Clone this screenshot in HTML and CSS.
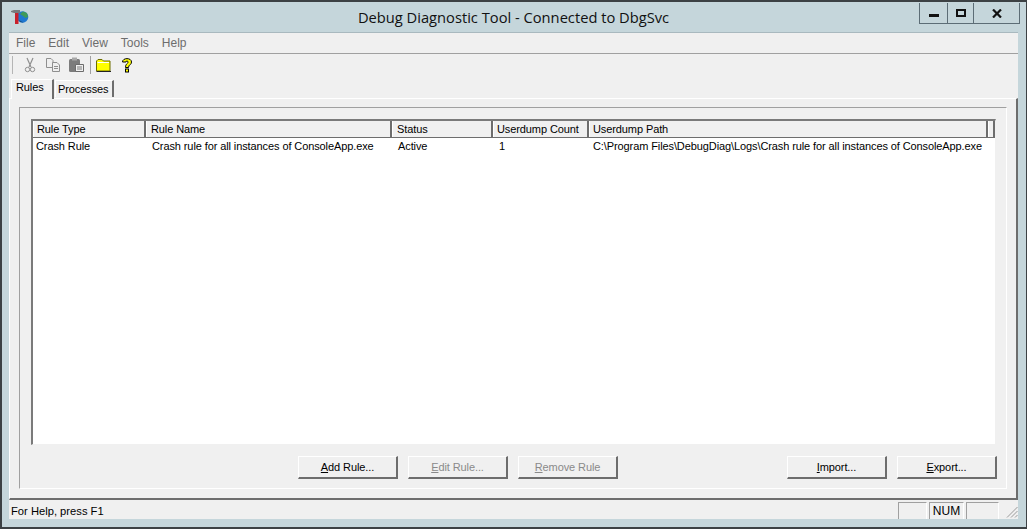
FILE: index.html
```html
<!DOCTYPE html>
<html lang="en">
<head>
    <meta charset="UTF-8">
    <meta name="viewport" content="width=device-width, initial-scale=1.0">
    <title>Debug Diagnostic Tool</title>
    <link rel="stylesheet" href="styles.css">
</head>
<body>
    <div class="window">
        <div class="titlebar">
            <svg class="app-icon" width="18" height="16" viewBox="0 0 18 16">
                <circle cx="11.5" cy="8" r="5.8" fill="#1f78d0"/>
                <path d="M9 5 L12 2.5 L16 4 L17 8 L14.5 9 L12 7 Z" fill="#3f9a5a"/>
                <path d="M8 11 L13 13.8 L9 13 Z" fill="#14508c"/>
                <path d="M0 2 L3 1 H9 V4 H3 L0 3 Z" fill="#77797c"/>
                <rect x="4" y="4" width="3.5" height="11" fill="#c8202c"/>
            </svg>
            <div class="title">Debug Diagnostic Tool - Connected to DbgSvc</div>
            <div class="winbtns">
                <div class="winbtn btn-min"><span class="min-glyph"></span></div>
                <div class="winbtn btn-max"><span class="max-glyph"></span></div>
                <div class="winbtn btn-close">
                    <svg width="10" height="9" viewBox="0 0 10 9"><path d="M1 0.5 L9 8.5 M9 0.5 L1 8.5" stroke="#111" stroke-width="2.2" fill="none"/></svg>
                </div>
            </div>
        </div>

        <div class="client">
            <div class="menubar">
                <span class="menu-item">File</span>
                <span class="menu-item">Edit</span>
                <span class="menu-item">View</span>
                <span class="menu-item">Tools</span>
                <span class="menu-item">Help</span>
            </div>

            <div class="toolbar">
                <span class="grip"></span>
                <svg class="tool" width="16" height="16" viewBox="0 0 16 16">
                    <path d="M5 1 L9 10 M11 1 L7 10" stroke="#8f8f8f" stroke-width="1.2" fill="none"/>
                    <circle cx="5.5" cy="12.5" r="2.2" stroke="#8f8f8f" fill="none"/>
                    <circle cx="10.5" cy="12.5" r="2.2" stroke="#8f8f8f" fill="none"/>
                </svg>
                <svg class="tool" width="16" height="16" viewBox="0 0 16 16">
                    <path d="M1.5 1.5 H6 L8 3.5 V10.5 H1.5 Z" fill="#efefef" stroke="#8f8f8f"/>
                    <path d="M7.5 5.5 H12 L14.5 8 V14.5 H7.5 Z" fill="#efefef" stroke="#8f8f8f"/>
                    <path d="M9 9.5 H13 M9 11.5 H13" stroke="#8f8f8f"/>
                </svg>
                <svg class="tool" width="16" height="16" viewBox="0 0 16 16">
                    <rect x="1" y="2" width="11" height="13" rx="1.5" fill="#7c7c7c"/>
                    <rect x="4" y="0.5" width="5" height="3" fill="#a8a8a8"/>
                    <path d="M7.5 7.5 H15.5 V14.5 H7.5 Z" fill="#efefef" stroke="#6c6c6c"/>
                    <path d="M9 10 H14 M9 12 H14" stroke="#7c7c7c"/>
                </svg>
                <span class="tool-sep"></span>
                <svg class="tool tool-folder" width="16" height="14" viewBox="0 0 16 14">
                    <path d="M0.5 3 L2 1.5 H6 L7.5 3 H14 V13 H0.5 Z" fill="#ffff00" stroke="#6d6d00"/>
                    <path d="M1.5 4.5 H13" stroke="#fff"/>
                    <path d="M0.5 13.5 H15" stroke="#222"/>
                </svg>
                <svg class="tool" width="12" height="16" viewBox="0 0 12 16">
                    <path d="M1.5 5 C1.5 0.5 10.5 0.5 10.5 5 C10.5 8 7.5 7.5 7.5 10.5 H4.5 C4.5 6.5 7 7 7 5 C7 3.6 5 3.6 5 5 Z" fill="#ffff00" stroke="#000"/>
                    <rect x="4.5" y="12" width="3" height="3" fill="#ffff00" stroke="#000"/>
                </svg>
            </div>

            <div class="tabs">
                <div class="tab tab-active">Rules</div>
                <div class="tab">Processes</div>
            </div>

            <div class="tabpage">
                <div class="groupbox">
                    <div class="listview">
                        <div class="list-row list-head">
                            <div class="col col-type">Rule Type</div>
                            <div class="col col-name">Rule Name</div>
                            <div class="col col-status">Status</div>
                            <div class="col col-count">Userdump Count</div>
                            <div class="col col-path">Userdump Path</div>
                            <div class="col col-rest"></div>
                        </div>
                        <div class="list-row list-item">
                            <div class="col col-type">Crash Rule</div>
                            <div class="col col-name">Crash rule for all instances of ConsoleApp.exe</div>
                            <div class="col col-status">Active</div>
                            <div class="col col-count">1</div>
                            <div class="col col-path">C:\Program Files\DebugDiag\Logs\Crash rule for all instances of ConsoleApp.exe</div>
                        </div>
                    </div>
                    <div class="actions">
                        <div class="btn-group">
                            <button class="btn"><u>A</u>dd Rule...</button>
                            <button class="btn" disabled><u>E</u>dit Rule...</button>
                            <button class="btn" disabled><u>R</u>emove Rule</button>
                        </div>
                        <div class="btn-group">
                            <button class="btn"><u>I</u>mport...</button>
                            <button class="btn"><u>E</u>xport...</button>
                        </div>
                    </div>
                </div>
            </div>

            <div class="statusbar">
                <div class="status-text">For Help, press F1</div>
                <div class="pane"></div>
                <div class="pane pane-num">NUM</div>
                <div class="pane"></div>
                <svg class="sizer" width="12" height="12" viewBox="0 0 12 12">
                    <path d="M11.5 1 L1 11.5 M11.5 5 L5 11.5 M11.5 9 L9 11.5" stroke="#9a9a9a" fill="none"/>
                </svg>
            </div>
        </div>
    </div>
</body>
</html>
```

FILE: styles.css
```css
html, body {
    margin: 0;
    padding: 0;
    height: 100%;
    overflow: hidden;
}
body {
    font-family: "Liberation Sans", Arial, sans-serif;
    font-size: 11px;
    letter-spacing: -0.1px;
    color: #000;
    background-color: #c5d6db;
}
.window {
    box-sizing: border-box;
    height: 529px;
    display: flex;
    flex-direction: column;
    background-color: #c5d6db;
    border-top: 2px solid #3c4144;
    border-left: 2px solid #3c4144;
    border-right: 1px solid #3c4144;
    border-bottom: 2px solid #3c4144;
    padding: 0 8px 8px 7px;
}
.titlebar {
    display: grid;
    grid-template-columns: 1fr auto 1fr;
    align-items: start;
    height: 30px;
    flex: none;
}
.app-icon {
    margin: 7px 0 0 2px;
}
.title {
    font-family: "Open Sans", sans-serif;
    font-size: 14.7px;
    letter-spacing: 0;
    line-height: 20px;
    padding: 5px 0 0 0;
    color: #111;
    white-space: nowrap;
}
.winbtns {
    display: flex;
    justify-self: end;
    height: 21px;
    margin-right: -2px;
    border: 1px solid #5c6d76;
    border-top: none;
    box-sizing: border-box;
    margin-top: 1px;
}
.winbtn {
    display: flex;
    align-items: center;
    justify-content: center;
    box-sizing: border-box;
    border-right: 1px solid #5c6d76;
}
.btn-min { width: 28px; }
.btn-max { width: 26px; }
.btn-close { width: 45px; border-right: none; }
.min-glyph {
    display: block;
    width: 10px;
    height: 3px;
    margin-top: 5px;
    background-color: #111;
}
.max-glyph {
    display: block;
    box-sizing: border-box;
    width: 10px;
    height: 8px;
    border: 2px solid #111;
}
.client {
    flex: 1;
    display: flex;
    flex-direction: column;
    background-color: #f0f0f0;
    border-top: 1px solid #a9b9bf;
    min-height: 0;
}
.menubar {
    display: flex;
    height: 21px;
    align-items: center;
    flex: none;
    border-bottom: 1px solid #a0a0a0;
    color: #6d6d6d;
    font-size: 12px;
    letter-spacing: 0;
    padding: 0 0 0 7px;
    box-sizing: border-box;
    gap: 13px;
}
.toolbar {
    display: flex;
    align-items: center;
    height: 24px;
    flex: none;
    padding: 0 0 2px 3px;
    box-sizing: border-box;
}
.grip {
    width: 1px;
    height: 18px;
    background-color: #b5b5b5;
    margin-right: 9px;
}
.tool {
    margin-right: 7px;
    flex: none;
}
.tool-folder {
    margin-right: 9px;
}
.tool-sep {
    width: 1px;
    height: 18px;
    background-color: #a0a0a0;
    margin: 0 5px 0 -1px;
}
.tabs {
    display: flex;
    align-items: flex-end;
    height: 20px;
    flex: none;
    padding-left: 2px;
}
.tab {
    box-sizing: border-box;
    height: 17px;
    padding: 2px 4px 0 2px;
    border-top: 1px solid #fff;
    border-left: 1px solid #fff;
    border-right: 2px solid #6d6d6d;
    margin-left: 1px;
    margin-bottom: 1px;
}
.tab-active {
    height: 20px;
    width: 43px;
    padding: 1px 0 0 4px;
    margin-left: 0;
    position: relative;
    z-index: 1;
    background-color: #f0f0f0;
    margin-bottom: -1px;
}
.tabpage {
    flex: 1;
    display: flex;
    box-sizing: border-box;
    border-top: 1px solid #fff;
    border-right: 2px solid #6d6d6d;
    border-bottom: 2px solid #6d6d6d;
    border-left: 1px solid #fff;
    padding: 8px 9px 9px 9px;
    min-height: 0;
}
.groupbox {
    flex: 1;
    display: flex;
    flex-direction: column;
    box-sizing: border-box;
    border-top: 1px solid #a0a0a0;
    border-left: 1px solid #a0a0a0;
    border-right: 1px solid #fff;
    border-bottom: 1px solid #fff;
    padding: 11px 10px 9px 11px;
}
.listview {
    height: 326px;
    flex: none;
    box-sizing: border-box;
    background-color: #fff;
    border-top: 2px solid #7a7a7a;
    border-left: 2px solid #7a7a7a;
    border-right: 1px solid #f0f0f0;
    border-bottom: 1px solid #f0f0f0;
}
.list-row {
    display: flex;
}
.list-head {
    height: 16px;
    background-color: #f0f0f0;
    border-bottom: 1px solid #6d6d6d;
}
.list-head .col {
    box-sizing: border-box;
    border-right: 2px solid #6d6d6d;
    border-left: 1px solid #fff;
    padding-left: 4px;
    line-height: 16px;
}
.list-head .col-type { padding-left: 3px; }
.list-head .col-count { padding-left: 3px; }
.list-head .col-path { padding-left: 3px; }
.list-item {
    height: 17px;
    line-height: 17px;
}
.list-item .col {
    box-sizing: border-box;
    padding-left: 3px;
    white-space: nowrap;
}
.list-item .col-name { padding-left: 6px; }
.list-item .col-status { padding-left: 6px; }
.list-item .col-count { padding-left: 6px; }
.list-item .col-path { padding-left: 4px; }
.col-type { width: 113px; flex: none; }
.col-name { width: 246px; flex: none; }
.col-status { width: 101px; flex: none; }
.col-count { width: 96px; flex: none; }
.col-path { width: 399px; flex: none; }
.col-rest { flex: 1; }
.actions {
    display: flex;
    justify-content: space-between;
    margin: 11px -1px 0 0;
    padding-left: 267px;
}
.btn-group {
    display: flex;
    gap: 10px;
}
.btn {
    box-sizing: border-box;
    width: 100px;
    height: 23px;
    padding: 0;
    font: inherit;
    letter-spacing: inherit;
    color: #000;
    background-color: #f0f0f0;
    border-top: 1px solid #fff;
    border-left: 1px solid #fff;
    border-right: 2px solid #6d6d6d;
    border-bottom: 2px solid #6d6d6d;
}
.btn:disabled {
    color: #8a8a8a;
}
.statusbar {
    display: flex;
    align-items: flex-end;
    height: 19px;
    flex: none;
    font-size: 11.2px;
    letter-spacing: 0;
}
.status-text {
    flex: 1;
    padding-left: 2px;
    line-height: 16px;
}
.pane {
    box-sizing: border-box;
    width: 29px;
    height: 17px;
    margin-right: 2px;
    border-top: 1px solid #a0a0a0;
    border-left: 1px solid #a0a0a0;
    border-right: 1px solid #fff;
    font-size: 12px;
    line-height: 17px;
    text-align: center;
}
.pane-num {
    width: 35px;
}
.pane:nth-of-type(4) {
    width: 33px;
}
.sizer {
    margin: 0 0 1px 5px;
    flex: none;
}
```
